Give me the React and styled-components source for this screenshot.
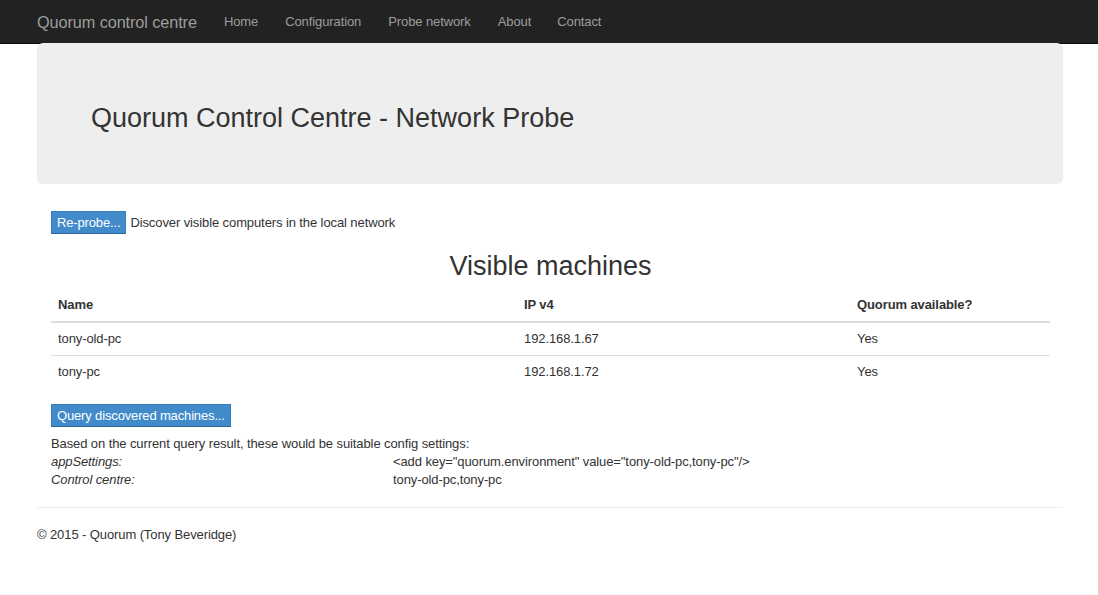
import React from 'react'
import styled, { createGlobalStyle } from 'styled-components'

const GlobalStyle = createGlobalStyle`
    body {
        margin:0;
        font-family:"Liberation Sans", Arial, sans-serif;
        font-size:13px;
        line-height:18px;
        letter-spacing:-0.1px;
        color:#333;
        background:#fff;
    }
`

const Navbar = styled.nav`
    height:43px;
    background-color:#222;
    border-bottom:1px solid #080808;
    display:flex;
    align-items:center;
    padding-left:37px;
`

const Brand = styled.div`
    font-size:16.3px;
    color:#9d9d9d;
    margin-right:27px;
`

const NavLink = styled.a`
    font-size:13px;
    color:#9d9d9d;
    text-decoration:none;
    margin-right:${p => p.$gap}px;
`

const Page = styled.div`
    padding:0 35px 0 37px;
`

const Jumbotron = styled.div`
    height:141px;
    background-color:#eee;
    border-radius:6px;
    margin-top:-1px;
    display:flex;
    align-items:center;
    padding:8px 0 0 54px;
    box-sizing:border-box;
`

const Title = styled.h1`
    margin:0;
    font-size:27px;
    font-weight:400;
    letter-spacing:0;
    color:#333;
`

const Body = styled.div`
    padding:27px 13px 0 14px;
`

const ActionRow = styled.div`
    display:flex;
    align-items:center;
    gap:4px;
`

const Button = styled.button`
    font-family:inherit;
    font-size:13px;
    letter-spacing:-0.15px;
    color:#fff;
    background-color:#428bca;
    border:1px solid #357ebd;
    border-bottom-color:#2a6496;
    border-radius:0;
    height:23px;
    padding:0 5px;
    cursor:pointer;
`

const Heading = styled.h2`
    margin:15px 0 6px;
    font-size:27px;
    font-weight:400;
    letter-spacing:0;
    text-align:center;
    line-height:34px;
`

const Table = styled.table`
    width:100%;
    table-layout:fixed;
    border-collapse:collapse;
    margin-bottom:16px;
`

const Th = styled.th`
    text-align:left;
    font-weight:700;
    padding:7px 7px;
    width:${p => p.$w || 'auto'};
    border-bottom:2px solid #ddd;
`

const Td = styled.td`
    padding:7px 7px;
    border-top:${p => (p.$first ? 'none' : '1px solid #ddd')};
`

const Config = styled.div`
    margin-top:8px;
`

const ConfigGrid = styled.div`
    display:grid;
    grid-template-columns:342px 1fr;
`

const Label = styled.div`
    font-style:italic;
`

const Rule = styled.hr`
    margin:18px 0 18px;
    border:0;
    border-top:1px solid #eee;
`

const Footer = styled.footer`
    font-size:13px;
`

const machines = [
    { name: 'tony-old-pc', ip: '192.168.1.67', quorum: 'Yes' },
    { name: 'tony-pc', ip: '192.168.1.72', quorum: 'Yes' },
]

function App() {
    return (
        <>
            <GlobalStyle />
            <Navbar>
                <Brand>Quorum control centre</Brand>
                <NavLink $gap={27}>Home</NavLink>
                <NavLink $gap={27}>Configuration</NavLink>
                <NavLink $gap={27}>Probe network</NavLink>
                <NavLink $gap={26}>About</NavLink>
                <NavLink $gap={0}>Contact</NavLink>
            </Navbar>
            <Page>
                <Jumbotron>
                    <Title>Quorum Control Centre - Network Probe</Title>
                </Jumbotron>
                <Body>
                    <ActionRow>
                        <Button>Re-probe...</Button>
                        <span>Discover visible computers in the local network</span>
                    </ActionRow>
                    <Heading>Visible machines</Heading>
                    <Table>
                        <thead>
                            <tr>
                                <Th $w="452px">Name</Th>
                                <Th $w="319px">IP v4</Th>
                                <Th>Quorum available?</Th>
                            </tr>
                        </thead>
                        <tbody>
                            {machines.map((m, i) => (
                                <tr key={m.name}>
                                    <Td $first={i === 0}>{m.name}</Td>
                                    <Td $first={i === 0}>{m.ip}</Td>
                                    <Td $first={i === 0}>{m.quorum}</Td>
                                </tr>
                            ))}
                        </tbody>
                    </Table>
                    <Button>Query discovered machines...</Button>
                    <Config>
                        <div>Based on the current query result, these would be suitable config settings:</div>
                        <ConfigGrid>
                            <Label>appSettings:</Label>
                            <div>&lt;add key="quorum.environment" value="tony-old-pc,tony-pc"/&gt;</div>
                            <Label>Control centre:</Label>
                            <div>tony-old-pc,tony-pc</div>
                        </ConfigGrid>
                    </Config>
                </Body>
                <Rule />
                <Footer>© 2015 - Quorum (Tony Beveridge)</Footer>
            </Page>
        </>
    )
}

export default App
